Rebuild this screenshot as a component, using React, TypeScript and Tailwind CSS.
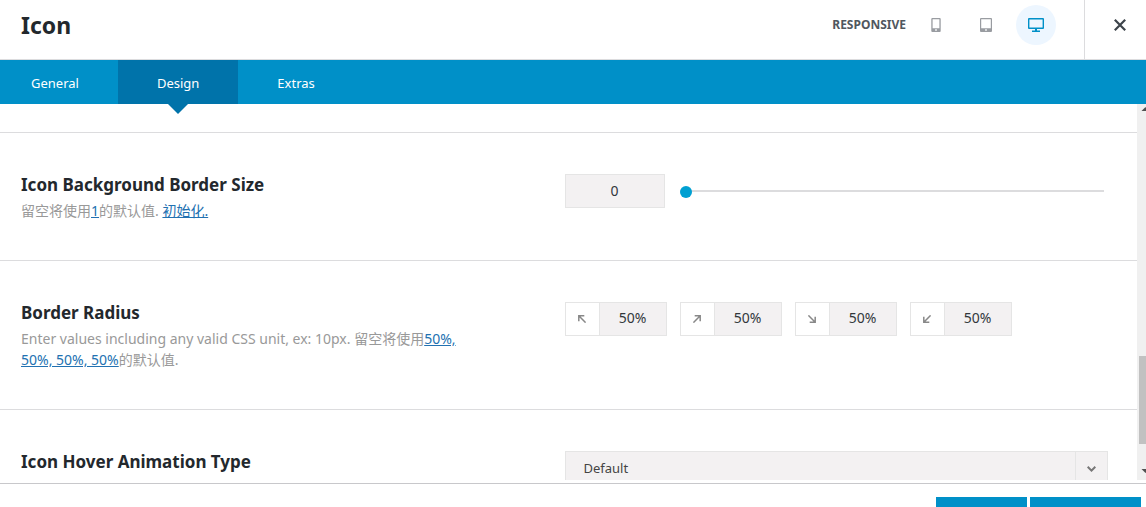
import { FC, ReactNode, useState } from 'react';

interface Corner {
  name: string;
  rotate: string;
}

const tabs = ['General', 'Design', 'Extras'];

const corners: Corner[] = [
  { name: 'Top left', rotate: '' },
  { name: 'Top right', rotate: 'rotate-90' },
  { name: 'Bottom right', rotate: 'rotate-180' },
  { name: 'Bottom left', rotate: '-rotate-90' },
];

const PhoneIcon: FC = () => (
  <svg width="10" height="14" viewBox="0 0 10 14" fill="currentColor">
    <path
      fillRule="evenodd"
      d="M1.300 0h7.400A1 1 0 0 1 9.700 1v12a1 1 0 0 1-1 1H1.300a1 1 0 0 1-1-1V1a1 1 0 0 1 1-1zM1.600 1.200v9h6.800v-9zM4.200 11.200v1.600h1.600v-1.600z"
    />
  </svg>
);

const TabletIcon: FC = () => (
  <svg width="12" height="14" viewBox="0 0 12 14" fill="currentColor">
    <path
      fillRule="evenodd"
      d="M1 0h10a1 1 0 0 1 1 1v12a1 1 0 0 1-1 1H1a1 1 0 0 1-1-1V1a1 1 0 0 1 1-1zM1.200 1.200v9h9.600v-9zM5.200 11.200v1.600h1.600v-1.600z"
    />
  </svg>
);

const DesktopIcon: FC = () => (
  <svg width="16" height="14" viewBox="0 0 16 14" fill="currentColor">
    <path
      fillRule="evenodd"
      d="M1 0h14a1 1 0 0 1 1 1v9a1 1 0 0 1-1 1H9v1.500h3V14H4v-1.500h3V11H1a1 1 0 0 1-1-1V1a1 1 0 0 1 1-1zM1.400 1.400v8.200h13.200V1.400z"
    />
  </svg>
);

const Option: FC<{ title: string; description?: ReactNode; children: ReactNode }> = ({
  title,
  description,
  children,
}) => (
  <section className="grid grid-cols-2 border-t border-[#dcdcde] pt-[41px] pr-[29px] pb-[39px] pl-[21px]">
    <div className="pr-24">
      <h3 className="text-[17px] leading-[22px] font-bold text-[#23282d]">{title}</h3>
      {description && (
        <p className="mt-1 text-sm leading-[21px] text-[#999]">{description}</p>
      )}
    </div>
    <div>{children}</div>
  </section>
);

const link = 'text-[#2271b1] underline';

const App: FC = () => {
  const [size, setSize] = useState('0');

  return (
    <div className="flex h-screen flex-col overflow-hidden bg-white font-['Noto_Sans','Noto_Sans_CJK_SC',sans-serif]">
      <header className="flex h-[60px] shrink-0 border-b border-[#dcdcde] pl-[21px]">
        <h2 className="flex-1 pt-[10px] text-[23px] leading-[30px] font-bold text-[#23282d]">
          Icon
        </h2>
        <div className="flex h-[50px] items-center gap-[10px] pr-7 text-[#999ca1]">
          <span className="text-xs font-bold text-[#50575e]">RESPONSIVE</span>
          <button aria-label="Phone" className="flex size-10 items-center justify-center">
            <PhoneIcon />
          </button>
          <button aria-label="Tablet" className="flex size-10 items-center justify-center">
            <TabletIcon />
          </button>
          <button
            aria-label="Desktop"
            className="flex size-10 items-center justify-center rounded-full bg-[#edf6ff] text-[#0090c8]"
          >
            <DesktopIcon />
          </button>
        </div>
        <button
          aria-label="Close"
          className="flex w-[62px] justify-center border-l border-[#dcdcde] pt-[19px] pl-2 text-[#3c434a]"
        >
          <svg width="12" height="12" viewBox="0 0 12 12" stroke="currentColor" strokeWidth="2.200">
            <path d="M.8.8l10.400 10.400M11.200.8L.8 11.200" />
          </svg>
        </button>
      </header>

      <nav className="z-10 -ml-2 flex h-11 shrink-0 bg-[#0090c8] text-[13px] leading-[46px] text-white">
        {tabs.map((tab) => (
          <a
            key={tab}
            href={`#${tab}`}
            className={tab === 'Design' ? 'relative bg-[#0073aa] px-[39px]' : 'px-[39px]'}
          >
            {tab}
            {tab === 'Design' && (
              <span className="absolute top-full left-1/2 -translate-x-1/2 border-x-10 border-t-10 border-x-transparent border-t-[#0073aa]" />
            )}
          </a>
        ))}
      </nav>

      <main className="flex min-h-0 flex-1 overflow-hidden">
        <div className="flex-1 pt-7">
          <Option
            title="Icon Background Border Size"
            description={
              <>
                留空将使用<a href="#default" className={link}>1</a>的默认值.{' '}
                <a href="#reset" className={link}>初始化.</a>
              </>
            }
          >
            <div className="flex items-center gap-[15px] pr-1">
              <input
                type="text"
                aria-label="Border size"
                value={size}
                onChange={(e) => setSize(e.target.value)}
                className="h-[34px] w-[100px] border border-[#e5e5e5] bg-[#f3f1f2] pb-[2px] text-center text-sm text-[#32373c]"
              />
              <input
                type="range"
                aria-label="Border size slider"
                min="0"
                max="50"
                value={Number(size) || 0}
                onChange={(e) => setSize(e.target.value)}
                className="h-3 min-w-0 flex-1 appearance-none bg-transparent [&::-webkit-slider-runnable-track]:h-[2px] [&::-webkit-slider-runnable-track]:bg-[#dcdcde] [&::-webkit-slider-thumb]:-mt-1 [&::-webkit-slider-thumb]:size-3 [&::-webkit-slider-thumb]:appearance-none [&::-webkit-slider-thumb]:rounded-full [&::-webkit-slider-thumb]:bg-[#00a0d2]"
              />
            </div>
          </Option>

          <Option
            title="Border Radius"
            description={
              <>
                Enter values including any valid CSS unit, ex: 10px. 留空将使用
                <a href="#default" className={link}>50%, 50%, 50%, 50%</a>的默认值.
              </>
            }
          >
            <div className="flex gap-[13px]">
              {corners.map((corner) => (
                <label
                  key={corner.name}
                  className="flex h-[34px] w-[102px] border border-[#e5e5e5]"
                >
                  <span className="flex w-[34px] shrink-0 items-center justify-center border-r border-[#e5e5e5] text-[#888]">
                    <svg
                      width="8"
                      height="8"
                      viewBox="0 0 8 8"
                      fill="none"
                      stroke="currentColor"
                      strokeWidth="1.500"
                      className={corner.rotate}
                    >
                      <path d="M.8 6.300V.8h5.500M.8.8l6.800 6.800" />
                    </svg>
                  </span>
                  <input
                    type="text"
                    aria-label={corner.name}
                    defaultValue="50%"
                    className="min-w-0 flex-1 bg-[#f3f1f2] pb-[2px] text-center text-sm text-[#32373c]"
                  />
                </label>
              ))}
            </div>
          </Option>

          <Option title="Icon Hover Animation Type">
            <div className="relative">
              <select
                aria-label="Icon Hover Animation Type"
                className="h-[35px] w-full appearance-none border border-[#e5e5e5] bg-[#f3f1f2] px-[18px] text-[13px] text-[#444]"
              >
                <option>Default</option>
              </select>
              <span className="pointer-events-none absolute inset-y-0 right-0 flex w-[33px] items-center justify-center border-x border-[#e5e5e5] text-[#777]">
                <svg width="9" height="6" viewBox="0 0 9 6" fill="none" stroke="currentColor" strokeWidth="2">
                  <path d="M.7.8l3.800 3.800L8.300.8" />
                </svg>
              </span>
            </div>
          </Option>
        </div>

        <div className="w-[9px] shrink-0 overflow-hidden bg-[#f0f0f0]">
          <div className="flex h-full w-[17px] flex-col items-center text-[#505050]">
            <svg width="17" height="17" viewBox="0 0 17 17" fill="currentColor">
              <path d="M4.500 7L8.500 3l4 4z" />
            </svg>
            <div className="mt-auto mb-[19px] h-[88px] w-[13px] bg-[#c1c1c1]" />
            <svg width="17" height="17" viewBox="0 0 17 17" fill="currentColor">
              <path d="M4.500 6l4 4 4-4z" />
            </svg>
          </div>
        </div>
      </main>

      <footer className="mt-[3px] flex h-6 shrink-0 justify-end gap-[3px] overflow-hidden border-t border-[#c8c8cb] pt-[13px] pr-[5px]">
        <button aria-label="Cancel" className="h-10 w-[91px] bg-[#0090c8]" />
        <button aria-label="Save" className="h-10 w-[111px] bg-[#0090c8]" />
      </footer>
    </div>
  );
};

export default App;
